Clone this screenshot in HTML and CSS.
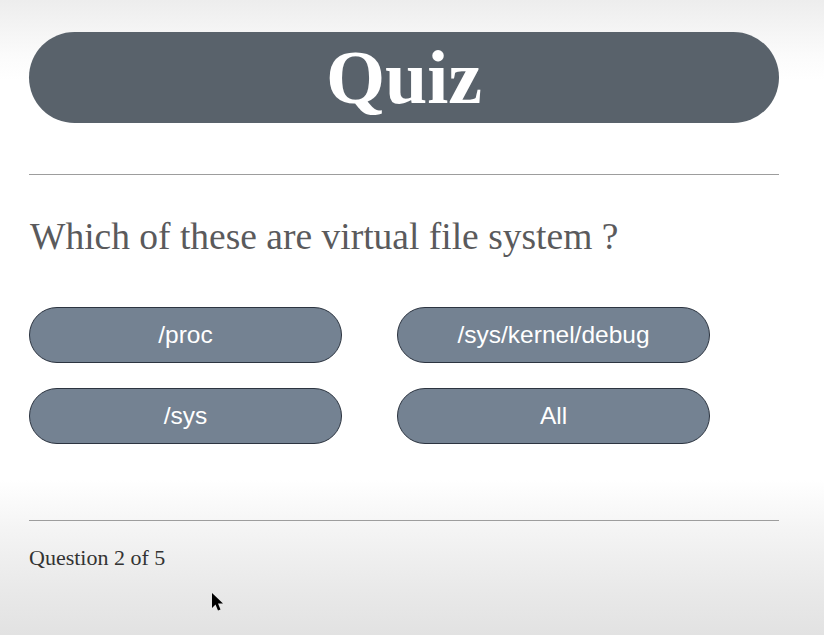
FILE: index.html
```html
<!DOCTYPE html>
<html lang="en">
<head>
<meta charset="utf-8">
<title>Quiz</title>
<link rel="stylesheet" href="styles.css">
</head>
<body>
<main class="quiz">
  <header class="quiz-header">Quiz</header>
  <hr class="rule rule-top">
  <h2 class="question">Which of these are virtual file system ?</h2>
  <div class="options">
    <button class="option">/proc</button>
    <button class="option">/sys/kernel/debug</button>
    <button class="option">/sys</button>
    <button class="option">All</button>
  </div>
  <hr class="rule rule-bottom">
  <p class="progress">Question 2 of 5</p>
</main>
<svg class="cursor" width="14" height="20" viewBox="0 0 14 20"><path d="M1 1 L1 16 L4.5 12.5 L7 18.5 L9.5 17.5 L7 11.5 L12 11.5 Z" fill="#000"/></svg>
</body>
</html>
```
FILE: styles.css
```css
html, body {
  margin: 0;
  padding: 0;
  height: 100%;
}
body {
  background: linear-gradient(to bottom, #ededed 0px, #fbfbfb 55px, #ffffff 80px, #ffffff 480px, #f4f4f4 530px, #e9e9e9 590px, #e2e2e2 635px);
  min-height: 635px;
  font-family: "Liberation Serif", "Times New Roman", serif;
  position: relative;
  overflow: hidden;
}
.quiz {
  width: 750px;
  padding: 32px 0 0 29px;
}
.quiz-header {
  height: 91px;
  line-height: 91px;
  border-radius: 46px;
  background: #59626b;
  color: #fff;
  text-align: center;
  font-weight: bold;
  font-size: 76px;
}
.rule {
  border: 0;
  height: 1px;
  background: #9d9d9d;
  margin: 0;
}
.rule-top {
  margin-top: 51px;
}
.question {
  margin: 40px 0 0 1px;
  font-weight: normal;
  font-size: 37.5px;
  line-height: 44px;
  color: #5a5a5c;
}
.options {
  display: grid;
  grid-template-columns: 313px 313px;
  grid-auto-rows: 56px;
  column-gap: 55px;
  row-gap: 25px;
  margin-top: 48px;
}
.option {
  font-family: "Liberation Sans", Arial, sans-serif;
  font-size: 24.5px;
  color: #fff;
  background: #748292;
  border: 1px solid #2c3440;
  border-radius: 28px;
  padding: 0;
  margin: 0;
}
.rule-bottom {
  margin-top: 76px;
}
.progress {
  margin: 24px 0 0 0;
  font-size: 22px;
  color: #333;
}
.cursor {
  position: absolute;
  left: 211px;
  top: 592px;
}
```
